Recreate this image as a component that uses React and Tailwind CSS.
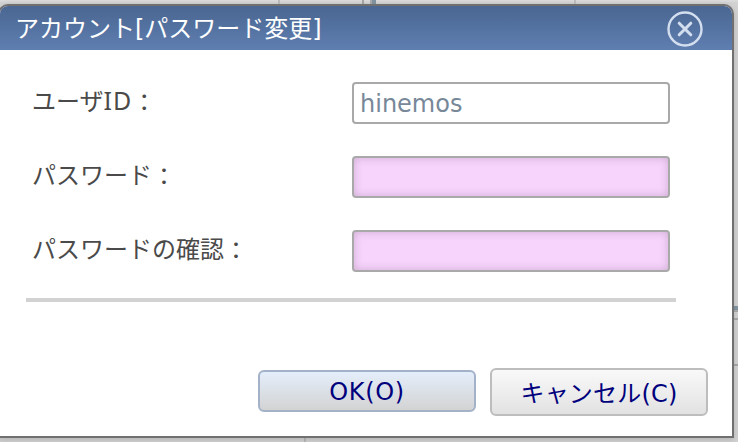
import React, { useState } from 'react'

function App() {
    const [password, setPassword] = useState('')
    const [confirm, setConfirm] = useState('')

    return (
        <div className="relative h-[442px] w-[738px] overflow-hidden bg-[#d2d2d2] font-['DejaVu_Sans','Noto_Sans_CJK_JP',sans-serif] text-2xl">
            <Workbench />

            <div className="relative mt-1 -ml-0.5 flex h-[434px] w-[736px] flex-col overflow-hidden rounded-t-[10px] border-2 border-[#707070] bg-white shadow-[0_2px_6px_rgba(0,0,0,0.15)]">
                <header className="flex h-11 shrink-0 items-center justify-between bg-linear-to-b from-[#4a6691] to-[#5f7fb1] pr-[29px] pl-[15px] text-white">
                    <h1 className="pt-0.5 leading-[42px] whitespace-nowrap">アカウント[パスワード変更]</h1>
                    <button type="button" aria-label="閉じる" className="mt-0.5">
                        <CloseIcon />
                    </button>
                </header>

                <div className="flex flex-col gap-8 pt-8 pl-8">
                    <Field
                        label={
                            <>
                                ユーザ
                                <span className="font-['Noto_Sans',sans-serif] text-[25px] leading-none tracking-[1px]">ID</span>
                            </>
                        }
                    >
                        <input
                            readOnly
                            value="hinemos"
                            className="h-[42px] w-[318px] rounded border-2 border-[#a9a9a9] bg-white px-1.5 pt-0.5 text-[#778899] outline-none"
                        />
                    </Field>
                    <Field label="パスワード">
                        <PasswordInput value={password} onChange={setPassword} />
                    </Field>
                    <Field label="パスワードの確認">
                        <PasswordInput value={confirm} onChange={setConfirm} />
                    </Field>
                </div>

                <hr className="mt-[26px] ml-[26px] h-1 w-[650px] shrink-0 border-0 bg-[#d2d2d2]" />

                <div className="mt-[66px] flex items-start justify-end gap-3.5 pr-6 text-[#00007d] text-shadow-[0_2px_0_#fff]">
                    <button
                        type="button"
                        className="mt-0.5 h-[42px] w-[218px] rounded-md border-2 border-[#a3b2c9] bg-linear-to-b from-[#e4eefb] to-[#d3d3d3] pt-px leading-[38px] tracking-[0.7px]"
                    >
                        OK(O)
                    </button>
                    <button
                        type="button"
                        className="h-12 w-[218px] rounded-md border-2 border-[#bdbdbd] bg-linear-to-b from-[#f9f9f9] to-[#e2e2e2] pt-0.5 leading-[44px] tracking-[0.2px]"
                    >
                        キャンセル(C)
                    </button>
                </div>
            </div>
        </div>
    )
}

function Field({ label, children }) {
    return (
        <label className="flex h-[42px] items-center">
            <span className="w-80 -translate-y-px whitespace-nowrap text-[#4a4a4a]">
                {label}
                <span className="inline-block translate-y-px">：</span>
            </span>
            {children}
        </label>
    )
}

function PasswordInput({ value, onChange }) {
    return (
        <input
            type="password"
            value={value}
            onChange={(e) => onChange(e.target.value)}
            className="h-[42px] w-[318px] rounded border-2 border-[#a9a9a9] bg-[#f7d4fc] px-1.5 shadow-[inset_0_0_8px_rgba(120,90,120,0.32)] outline-none"
        />
    )
}

function CloseIcon() {
    return (
        <svg width="36" height="36" viewBox="0 0 36 36" fill="none" stroke="#d3deef" strokeLinecap="round">
            <circle cx="18" cy="18" r="16.5" strokeWidth="2.4" />
            <path d="M12.2 12.2L23.8 23.8M23.8 12.2L12.2 23.8" strokeWidth="3" />
        </svg>
    )
}

// edges of the panes that show around the dialog
function Workbench() {
    return (
        <div className="absolute inset-0">
            <div className="absolute top-0 h-1 w-full bg-linear-to-b from-[#dcdcdc] to-[#cfcfcf]" />
            <div className="absolute top-0 left-[278px] h-1 w-0.5 bg-[#bcbcbc]" />
            <div className="absolute top-0 left-[362px] h-1 w-0.5 bg-[#a6a6a6]" />
            <div className="absolute top-0 left-[370px] h-1 w-0.5 bg-[#aaaaaa]" />
            <div className="absolute top-0 left-[372px] h-1 w-1 bg-[#8193a0]" />
            <div className="absolute top-0 left-[574px] h-1 w-0.5 bg-[#bebebe]" />
            <div className="absolute top-[306px] right-0 h-1 w-1 bg-[#8496a2]" />
            <div className="absolute top-[310px] right-0 h-0.5 w-1 bg-[#aaaaaa]" />
            <div className="absolute top-[318px] right-0 h-0.5 w-1 bg-[#aaaaaa]" />
            <div className="absolute top-[364px] right-0 h-0.5 w-1 bg-[#a8a8a8]" />
            <div className="absolute bottom-0 left-[304px] h-1 w-0.5 bg-[#b9b9b9]" />
        </div>
    )
}

export default App
